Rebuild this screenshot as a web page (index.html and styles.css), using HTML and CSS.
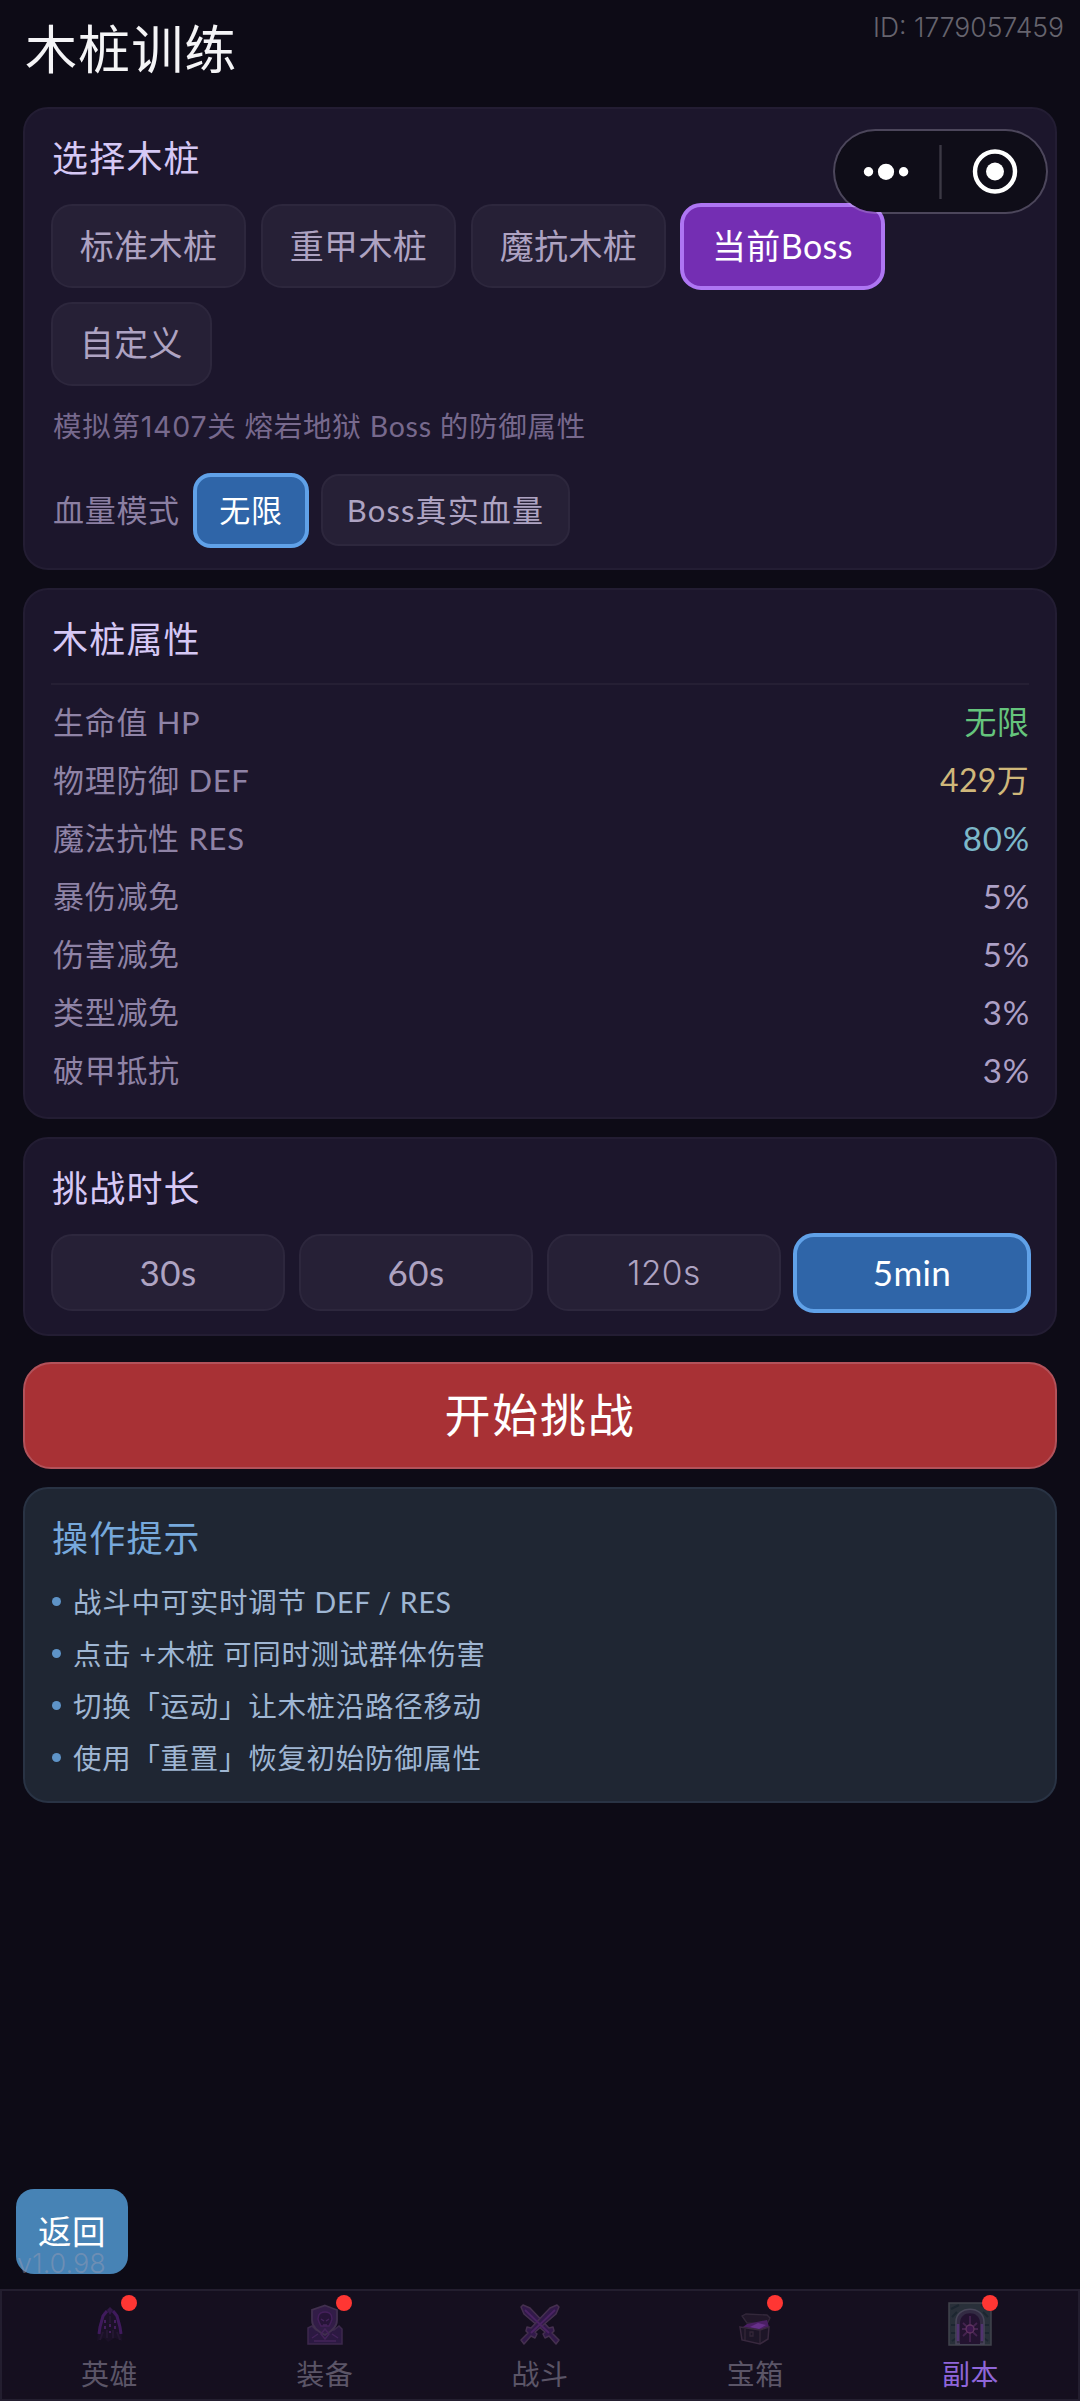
FILE: index.html
```html
<!DOCTYPE html>
<html lang="zh-CN">
<head>
<meta charset="utf-8">
<title>木桩训练</title>
<link rel="stylesheet" href="styles.css">
</head>
<body>
<header class="top">
  <h1 class="top-title">木桩训练</h1>
  <span class="user-id num">ID: 1779057459</span>
</header>

<main class="content">
  <section class="card card-target">
    <h2 class="card-title">选择木桩</h2>
    <div class="chips">
      <button class="chip">标准木桩</button>
      <button class="chip">重甲木桩</button>
      <button class="chip">魔抗木桩</button>
      <button class="chip chip-boss">当前Boss</button>
      <button class="chip">自定义</button>
    </div>
    <p class="hint">模拟第<span class="num">1407</span>关 熔岩地狱 Boss 的防御属性</p>
    <div class="mode">
      <span class="mode-label">血量模式</span>
      <button class="chip chip-small chip-on">无限</button>
      <button class="chip chip-small">Boss真实血量</button>
    </div>
  </section>

  <section class="card card-stats">
    <h2 class="card-title">木桩属性</h2>
    <dl class="stats">
      <div class="stat"><dt>生命值 HP</dt><dd class="green">无限</dd></div>
      <div class="stat"><dt>物理防御 DEF</dt><dd class="gold">429万</dd></div>
      <div class="stat"><dt>魔法抗性 RES</dt><dd class="pct cyan">80%</dd></div>
      <div class="stat"><dt>暴伤减免</dt><dd class="pct">5%</dd></div>
      <div class="stat"><dt>伤害减免</dt><dd class="pct">5%</dd></div>
      <div class="stat"><dt>类型减免</dt><dd class="pct">3%</dd></div>
      <div class="stat"><dt>破甲抵抗</dt><dd class="pct">3%</dd></div>
    </dl>
  </section>

  <section class="card card-time">
    <h2 class="card-title">挑战时长</h2>
    <div class="times">
      <button class="chip">30s</button>
      <button class="chip">60s</button>
      <button class="chip num">120s</button>
      <button class="chip chip-on">5min</button>
    </div>
  </section>

  <button class="start">开始挑战</button>

  <section class="card card-tips">
    <h2 class="card-title">操作提示</h2>
    <ul class="tips">
      <li>战斗中可实时调节 DEF / RES</li>
      <li>点击 +木桩 可同时测试群体伤害</li>
      <li>切换「运动」让木桩沿路径移动</li>
      <li>使用「重置」恢复初始防御属性</li>
    </ul>
  </section>
</main>

<nav class="tabs">
  <a class="tab">
    <span class="tab-icon"><svg width="44" height="44" viewBox="0 0 44 44">
      <path d="M22 5 15 10 11 23 9 39 16 36 20 40 27 36 34 39 33 22 29 10Z" fill="#1b1127"/>
      <path d="M19 9 15 14 12 25 11 32M25 9 29 14 32 25 33 32" fill="none" stroke="#3f1a5c" stroke-width="3"/>
      <path d="M19 8 22 5 25 8 22 13Z" fill="#321948"/>
      <path d="M17 18v3M27 18v3M17 24v3M27 24v3M22 22v3M22 29v2" stroke="#431e5c" stroke-width="2"/>
      <path d="M22 14v7M15 30l-3 8M29 30l3 8M19 28v8M25 28v8" stroke="#241731" stroke-width="2"/>
    </svg><i class="dot"></i></span>
    <span class="tab-name">英雄</span>
  </a>
  <a class="tab">
    <span class="tab-icon"><svg width="44" height="44" viewBox="0 0 44 44">
      <path d="M5 26 9 24 13 28 31 28 36 24 39 27 39 42 5 42Z" fill="#2c1942" stroke="#3c294c" stroke-width="1.5"/>
      <path d="M22 3.500 34 8 34 18C34 25 29 29 22 33 14 29 9 25 9 18L9 8Z" fill="#321c47" stroke="#41304f" stroke-width="1.800"/>
      <path d="M22 10c-7 0-8 6-6 10l2 4h8l2-4c2-4 1-10-6-10Z" fill="#271438" stroke="#44205a" stroke-width="1.500"/>
      <path d="M18 17l3 2M26 17l-3 2M20 23h4M22 27l4 5-4 5-4-5ZM9 36l6-4M35 36l-6-4M11 39h22" fill="none" stroke="#44245a" stroke-width="1.500"/>
    </svg><i class="dot"></i></span>
    <span class="tab-name">装备</span>
  </a>
  <a class="tab">
    <span class="tab-icon"><svg width="44" height="44" viewBox="0 0 44 44">
      <g stroke="#45304f" stroke-width="1.500" stroke-linejoin="round" fill="#32194a">
        <path d="M3 5 5 3 12 6 31 26 35 25 36 29 34 31 41 38 38 42 31 34 27 36 25 32 27 30 6 12Z"/>
        <path d="M41 5 39 3 32 6 13 26 9 25 8 29 10 31 3 38 6 42 13 34 17 36 19 32 17 30 38 12Z"/>
      </g>
      <path d="M7 8 31 31M37 8 13 31" stroke="#4b2363" stroke-width="1.800"/>
    </svg></span>
    <span class="tab-name">战斗</span>
  </a>
  <a class="tab">
    <span class="tab-icon"><svg width="44" height="44" viewBox="0 0 44 44">
      <path d="M9 14 13 12 34 13 37 16 34 22 14 21Z" fill="#211729" stroke="#33283a" stroke-width="1.300"/>
      <path d="M14 22 34 18 36 25 27 28 10 25Z" fill="#4b1f64"/>
      <path d="M17 25 25 21 33 23 26 27Z" fill="#67318a"/>
      <path d="M7 25 27 28 36 25 35 37 27 42 9 38Z" fill="#1d1527" stroke="#39293f" stroke-width="1.500"/>
      <path d="M27 28v13M12 27v11M17 30h3v4h-3Z" fill="none" stroke="#342739" stroke-width="1.300"/>
    </svg><i class="dot"></i></span>
    <span class="tab-name">宝箱</span>
  </a>
  <a class="tab tab-on">
    <span class="tab-icon"><svg width="44" height="44" viewBox="0 0 44 44">
      <path d="M1 1h42v42H1Z" fill="#29303a" stroke="#40434c" stroke-width="1.500"/>
      <path d="M3 7 11 3M4 15 9 10M3 23h6M3 31h6M4 39l6-4M41 7 33 3M40 15l-5-5M41 23h-6M41 31h-6M40 39l-6-4" stroke="#1c2630" stroke-width="2"/>
      <path d="M8 42V20C8 3 36 3 36 20v22Z" fill="#332b43" stroke="#484659" stroke-width="1.500"/>
      <path d="M12 42V21C12 8 32 8 32 21v21Z" fill="#231330"/>
      <path d="M10 22v17M34 22v17" stroke="#513370" stroke-width="2.500"/>
      <path d="M22 14v26M15 21l14 13M29 21 15 34M14 27h16" stroke="#44234f" stroke-width="1.800"/>
      <circle cx="22" cy="27" r="4" fill="#3d164e" stroke="#613660" stroke-width="1.300"/>
    </svg><i class="dot"></i></span>
    <span class="tab-name">副本</span>
  </a>
</nav>

<div class="capsule">
  <svg width="215" height="85" viewBox="0 0 215 85">
    <g fill="#fff">
      <circle cx="35.500" cy="42.800" r="4.700"/><circle cx="53" cy="42.800" r="8.100"/><circle cx="70.600" cy="42.800" r="4.700"/>
      <circle cx="162" cy="42.500" r="9"/>
    </g>
    <circle cx="162" cy="42.500" r="20" fill="none" stroke="#fff" stroke-width="4.400"/>
    <path d="M107.500 16v54" stroke="#3b3944" stroke-width="2.400"/>
  </svg>
</div>
<button class="back">返回</button>
<span class="version num">v1.0.98</span>
</body>
</html>
```
FILE: styles.css
```css
* { box-sizing: border-box; margin: 0; padding: 0; }
body {
  width: 1080px; height: 2401px; overflow: hidden; position: relative;
  display: flex; flex-direction: column;
  background: #0d0b16; color: #aa9fc0;
  font-family: "Lato", "Noto Sans CJK SC", sans-serif;
}
button { font: inherit; color: inherit; border: 0; background: none; white-space: nowrap; }
h1, h2 { font-weight: 400; }
.num { font-family: "Inter", "Noto Sans CJK SC", sans-serif; }

.top { height: 107px; display: flex; justify-content: space-between; padding: 0 16px 0 25px; }
.top-title { font-size: 52px; line-height: 98px; letter-spacing: 1.100px; color: #f4f4f6; }
.user-id { font-size: 26.500px; line-height: 55px; color: #66646e; font-weight: 300; }

.content { flex: 1; display: flex; flex-direction: column; padding: 0 23px; }
.card { border: 2px solid #231d33; border-radius: 25px; background: #1c162c; padding: 24px 26px; margin-bottom: 18px; }
.card-title { font-size: 36px; line-height: 50px; letter-spacing: 1.200px; color: #d6c8f5; padding-left: 1px; }

.card-target { height: 463px; }
.chips { display: flex; flex-wrap: wrap; gap: 13.500px 15px; margin-top: 21px; }
.chip {
  height: 84px; padding: 0 26.700px 4px; border: 2px solid #2d273d; border-radius: 21px;
  background: #262036; color: #aea3c2; font-size: 34px; letter-spacing: .4px;
}
.chip-boss { height: 87px; margin: -1.500px -2px -1.500px -1px; padding: 0 28px 4px; border: 4px solid #ae76f3; background: #742eb3; color: #fff; }
.hint { font-size: 28.500px; line-height: 40px; letter-spacing: .75px; color: #77698d; margin-top: 20px; padding-left: 2px; white-space: nowrap; }
.mode { display: flex; align-items: center; gap: 13px; margin-top: 26px; font-size: 31px; height: 75px; }
.mode-label { color: #8b7fa2; letter-spacing: .7px; padding: 0 0 4px 2px; }
.chip-small { height: 72px; font-size: 31px; padding: 0 23.500px 4px; letter-spacing: 1.150px; border-radius: 18px; }
.chip-on { border: 4px solid #60a1e8; background: #2f65a8; color: #fff; }
.chip-small.chip-on { height: 75px; margin: 0 -1px 0 0; padding: 0 22.500px 4px; letter-spacing: .7px; }

.card-stats { height: 531px; }
.stats { border-top: 2px solid #251f34; margin-top: 19px; padding-top: 8px; }
.stat { display: flex; justify-content: space-between; height: 58px; line-height: 58px; font-size: 31px; letter-spacing: .7px; }
.stat dt { color: #8f83a6; padding-left: 2px; }
.stat dd { color: #ada0c6; font-size: 32px; letter-spacing: .3px; }
.stat .pct { font-size: 33px; letter-spacing: .8px; margin-right: -1px; }
.stat .green { color: #65c47c; }
.stat .gold { color: #cfb77a; }
.stat .cyan { color: #7cb8c9; }

.card-time { height: 199px; margin-bottom: 26px; }
.times { display: grid; grid-template-columns: repeat(4, 1fr); gap: 14px; margin-top: 21px; }
.times .chip { height: 77px; font-size: 35px; padding-bottom: 2px; }
.times .num { font-size: 33.500px; font-weight: 350; padding-bottom: 0; }
.times .chip-on { height: 80px; margin: -1.500px -2px; }

.start {
  height: 107px; margin-bottom: 17.500px; padding-bottom: 8px; flex: none; border: 2px solid #b2525a; border-radius: 28px;
  background: #a83135; color: #fff; font-size: 46px; letter-spacing: 1.800px;
}

.card-tips { height: 316.500px; background: #1f2633; border-color: #293344; }
.card-tips .card-title { color: #77a9dc; }
.tips { list-style: none; margin-top: 13px; }
.tips li {
  display: flex; align-items: center; gap: 12px; height: 52px; line-height: 52px;
  font-size: 28.500px; letter-spacing: .7px; color: #9fb6d3; white-space: nowrap;
}
.tips li::before { content: ""; width: 9px; height: 9px; border-radius: 50%; background: #5e93c7; margin-left: 1px; }

.tabs { height: 112px; display: flex; border: 2px solid #231e2f; background: #150f1f; }
.tab { flex: 1; display: flex; flex-direction: column; align-items: center; padding-top: 11px; color: #5b5567; }
.tab-on { color: #8f66d9; }
.tab-icon { position: relative; width: 44px; height: 44px; }
.tab-icon svg { display: block; }
.dot { position: absolute; left: 33.500px; top: -7px; width: 16px; height: 16px; border-radius: 50%; background: #ff3633; }
.tab-name { font-size: 28px; line-height: 40px; margin-top: 8px; letter-spacing: .5px; }

.capsule {
  position: absolute; left: 833px; top: 129px; width: 215px; height: 85px; border-radius: 43px;
  background: #0f0d18; background-clip: padding-box; border: 2.500px solid rgba(220, 215, 230, .25);
}
.capsule svg { display: block; margin: -2px; }
.back {
  position: absolute; left: 16px; top: 2189px; width: 112px; height: 85px; border-radius: 18px; padding-bottom: 4px;
  background: #4783b5; color: #fff; font-size: 33.500px; letter-spacing: .5px;
}
.version { position: absolute; left: 17px; top: 2247px; font-size: 27px; line-height: 34px; color: rgba(165, 160, 180, .42); font-weight: 300; }
```
